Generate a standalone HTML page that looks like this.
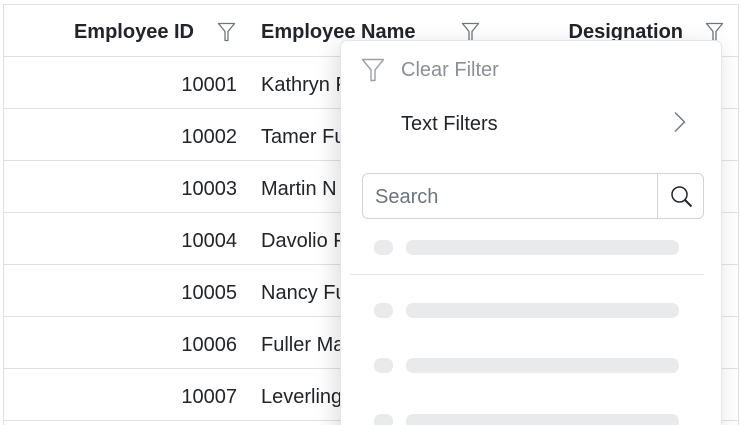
<!DOCTYPE html>
<html><head><meta charset="utf-8"><style>
*{margin:0;padding:0;box-sizing:border-box}
html,body{width:741px;height:425px;overflow:hidden}
body{background:#fff;font-family:"Liberation Sans",sans-serif;position:relative;color:#212529}
.grid{position:absolute;left:3px;top:4px;width:736px;height:430px;border:1px solid #dee2e6;border-bottom:none}
.hdr{position:absolute;left:0;top:0;width:100%;height:52px;border-bottom:1px solid #dee2e6}
.row{position:absolute;left:0;width:100%;height:52px;border-bottom:1px solid #dee2e6}
.t{position:absolute;font-size:20px;line-height:52px;top:2px;white-space:nowrap}
.b{font-weight:bold;font-size:20px;top:1px}
.pop{position:absolute;left:340px;top:40px;width:382px;height:400px;background:#fff;border:1px solid #e3e5e8;border-radius:7px;box-shadow:-4px 6px 24px rgba(0,0,0,.14)}
.sk{position:absolute;height:15px;background:#e9eaec;border-radius:7px}
</style></head><body>
<div class="grid">
 <div class="hdr">
  <span class="t b" style="right:544px">Employee ID</span>
  <span class="t b" style="left:257px">Employee Name</span>
  <span class="t b" style="right:55px">Designation</span>
 </div>
 <div class="row" style="top:52px"><span class="t" style="right:501px">10001</span><span class="t" style="left:257px">Kathryn F</span></div>
 <div class="row" style="top:104px"><span class="t" style="right:501px">10002</span><span class="t" style="left:257px">Tamer Fu</span></div>
 <div class="row" style="top:156px"><span class="t" style="right:501px">10003</span><span class="t" style="left:257px">Martin N</span></div>
 <div class="row" style="top:208px"><span class="t" style="right:501px">10004</span><span class="t" style="left:257px">Davolio F</span></div>
 <div class="row" style="top:260px"><span class="t" style="right:501px">10005</span><span class="t" style="left:257px">Nancy Fu</span></div>
 <div class="row" style="top:312px"><span class="t" style="right:501px">10006</span><span class="t" style="left:257px">Fuller Ma</span></div>
 <div class="row" style="top:364px"><span class="t" style="right:501px">10007</span><span class="t" style="left:257px">Leverling</span></div>
</div>
<svg style="position:absolute;left:217px;top:22px" width="19" height="20" viewBox="0 0 19 20"><path d="M1.5 1.5H17.5L11 9.5V18.5H8V9.5Z" fill="none" stroke="#6c757d" stroke-width="1.3" stroke-linejoin="round"/></svg>
<svg style="position:absolute;left:461px;top:22px" width="19" height="20" viewBox="0 0 19 20"><path d="M1.5 1.5H17.5L11 9.5V18.5H8V9.5Z" fill="none" stroke="#6c757d" stroke-width="1.3" stroke-linejoin="round"/></svg>
<svg style="position:absolute;left:705px;top:22px" width="19" height="20" viewBox="0 0 19 20"><path d="M1.5 1.5H17.5L11 9.5V18.5H8V9.5Z" fill="none" stroke="#6c757d" stroke-width="1.3" stroke-linejoin="round"/></svg>
<div class="pop">
 <svg style="position:absolute;left:20px;top:17px" width="24" height="24" viewBox="0 0 24 24"><path d="M1.5 1.5H22.5L14 12V22.5H10V12Z" fill="none" stroke="#9aa0a6" stroke-width="1.4" stroke-linejoin="round"/></svg>
 <span style="position:absolute;left:60px;top:18px;font-size:20px;color:#8a9097">Clear Filter</span>
 <span style="position:absolute;left:60px;top:72px;font-size:20px;color:#212529">Text Filters</span>
 <svg style="position:absolute;left:332px;top:70px" width="14" height="22" viewBox="0 0 14 22"><path d="M2 1.5L11.5 11L2 20.5" fill="none" stroke="#6c757d" stroke-width="1.4"/></svg>
 <div style="position:absolute;left:21px;top:132px;width:342px;height:46px;border:1px solid #ced4da;border-radius:6px">
  <span style="position:absolute;left:12px;top:12px;font-size:20px;color:#6c757d">Search</span>
  <div style="position:absolute;left:294px;top:0;width:1px;height:44px;background:#ced4da"></div>
  <svg style="position:absolute;left:306px;top:10px" width="26" height="26" viewBox="0 0 26 26"><circle cx="10.5" cy="10.5" r="7.5" fill="none" stroke="#212529" stroke-width="1.5"/><path d="M16 16L22.5 22.5" stroke="#212529" stroke-width="2"/></svg>
 </div>
 <div class="sk" style="left:33px;top:199px;width:19px"></div><div class="sk" style="left:65px;top:199px;width:273px"></div>
 <div style="position:absolute;left:9px;top:233px;width:354px;height:1px;background:#e3e5e8"></div>
 <div class="sk" style="left:33px;top:262px;width:19px"></div><div class="sk" style="left:65px;top:262px;width:273px"></div>
 <div class="sk" style="left:33px;top:317px;width:19px"></div><div class="sk" style="left:65px;top:317px;width:273px"></div>
 <div class="sk" style="left:33px;top:373px;width:19px"></div><div class="sk" style="left:65px;top:373px;width:273px"></div>
</div>
</body></html>
